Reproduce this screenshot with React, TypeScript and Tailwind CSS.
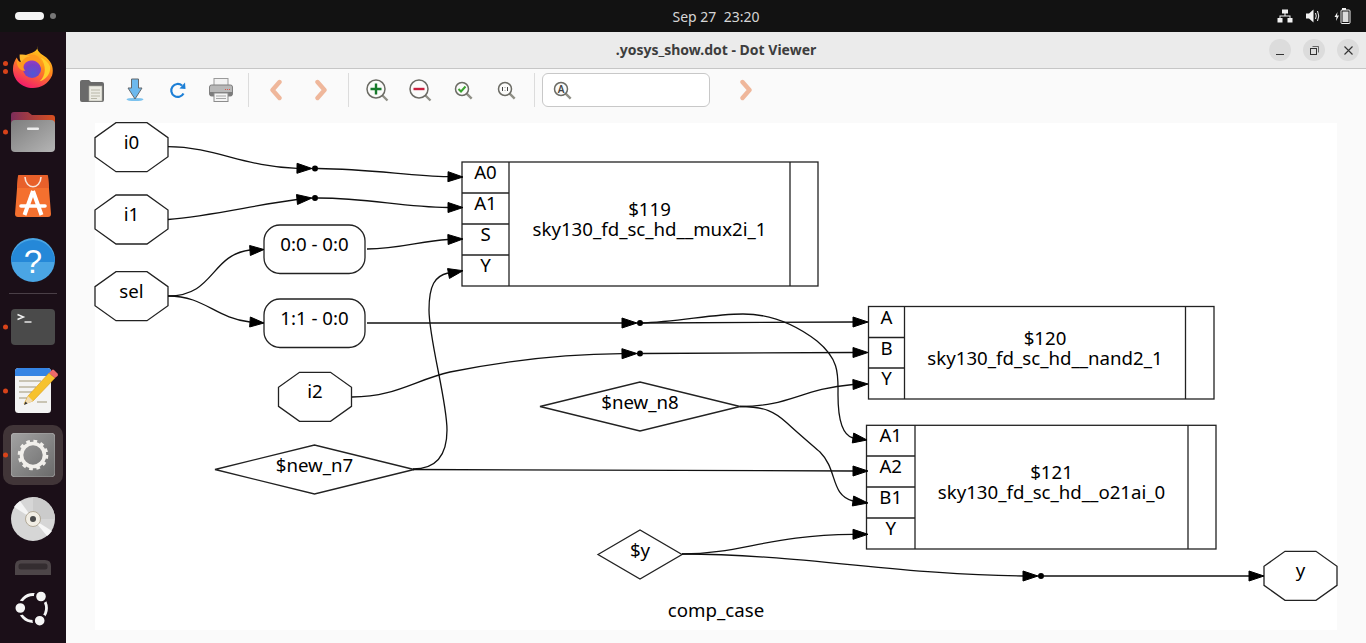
const uiFont = "font-['Noto_Sans',sans-serif]";

function Arrow({ tip, base }: { tip: [number, number]; base: [number, number] }) {
  const dx = tip[0] - base[0];
  const dy = tip[1] - base[1];
  const len = Math.hypot(dx, dy);
  const nx = (-dy / len) * 5;
  const ny = (dx / len) * 5;
  return (
    <polygon
      points={`${tip[0]},${tip[1]} ${base[0] + nx},${base[1] + ny} ${base[0] - nx},${base[1] - ny}`}
      fill="#000"
      stroke="#000"
    />
  );
}

function Octagon({ x, y, label }: { x: number; y: number; label: string }) {
  return (
    <g>
      <polygon
        points={`${x + 21},${y} ${x + 52},${y} ${x + 73},${y + 15} ${x + 73},${y + 34} ${x + 52},${y + 49} ${x + 21},${y + 49} ${x},${y + 34} ${x},${y + 15}`}
        fill="none"
        stroke="#222"
        strokeWidth="1.3"
      />
      <text x={x + 36.5} y={y + 26} textAnchor="middle" fontSize="18.67">{label}</text>
    </g>
  );
}

function Diamond({ left, right, cy, label }: { left: number; right: number; cy: number; label: string }) {
  const cx = (left + right) / 2;
  return (
    <g>
      <polygon
        points={`${left},${cy} ${cx},${cy - 24.5} ${right},${cy} ${cx},${cy + 24.5}`}
        fill="none"
        stroke="#222"
        strokeWidth="1.3"
      />
      <text x={cx} y={cy + 2} textAnchor="middle" fontSize="18.67">{label}</text>
    </g>
  );
}

function Pill({ y, label }: { y: number; label: string }) {
  return (
    <g>
      <rect x="264" y={y} width="101" height="48.5" rx="16" fill="none" stroke="#222" strokeWidth="1.3" />
      <text x="314.5" y={y + 26} textAnchor="middle" fontSize="18.67">{label}</text>
    </g>
  );
}

type CellProps = {
  x: number;
  right: number;
  col: number;
  end: number;
  rows: number[];
  ports: string[];
  title: string;
  cell: string;
};

function Cell({ x, right, col, end, rows, ports, title, cell }: CellProps) {
  const top = rows[0];
  const bottom = rows[rows.length - 1];
  const mid = (col + end) / 2;
  const midY = (top + bottom) / 2;
  return (
    <g>
      <rect x={x} y={top} width={right - x} height={bottom - top} fill="none" stroke="#222" strokeWidth="1.3" />
      <line x1={col} y1={top} x2={col} y2={bottom} stroke="#222" strokeWidth="1.3" />
      <line x1={end} y1={top} x2={end} y2={bottom} stroke="#222" strokeWidth="1.3" />
      {rows.slice(1, -1).map((r) => (
        <line key={r} x1={x} y1={r} x2={col} y2={r} stroke="#222" strokeWidth="1.3" />
      ))}
      {ports.map((p, i) => (
        <text key={p} x={(x + col) / 2} y={rows[i] + 17} textAnchor="middle" fontSize="18.67">{p}</text>
      ))}
      <text x={mid} y={midY - 8} textAnchor="middle" fontSize="18.67">{title}</text>
      <text x={mid} y={midY + 12} textAnchor="middle" fontSize="18.67">{cell}</text>
    </g>
  );
}

const edges = [
  "M168,146.7 C215,147 245,167 297,168.3",
  "M168,219.5 C210,216 255,205 297,199.5",
  "M318,168.5 C370,169 410,176 448,176.7",
  "M318,198 C370,198 400,207 448,207.5",
  "M367,249 C400,249 420,241 448,239.5",
  "M168,296 C215,296 210,255 250,250",
  "M168,296 C205,296 215,318 250,322",
  "M367,323 L622,323",
  "M413,469 C440,469 447,450 447,430 C447,400 429,340 429,310 C429,285 435,276 448,273",
  "M352,397 C395,397 415,380 450,372 C510,360 570,354 622,353.7",
  "M643,353.5 L853,352.5",
  "M643,323 L853,322",
  "M640,323 C680,322 710,314 743,314 C775,314 800,328 817,341 C840,360 838,375 838,395 C838,420 842,435 853,438",
  "M740,406.5 C790,406.5 800,389 853,384.5",
  "M740,406.5 C765,406.5 775,412 787,423 C800,435 812,445 820,452 C838,470 830,495 853,501",
  "M413,469.5 L853,471",
  "M682,554 C740,554 770,535 853,534.3",
  "M682,554 C800,554 900,575 1023,576",
  "M1044,576 L1249,576",
];

const arrows: { tip: [number, number]; base: [number, number] }[] = [
  { tip: [312, 168.5], base: [297, 168.3] },
  { tip: [312, 198], base: [297, 199.5] },
  { tip: [463, 177], base: [448, 176.7] },
  { tip: [463, 207.5], base: [448, 207.5] },
  { tip: [463, 239], base: [448, 239.5] },
  { tip: [264, 249.5], base: [250, 250.5] },
  { tip: [264, 323], base: [250, 322] },
  { tip: [637, 323], base: [622, 323] },
  { tip: [463, 270.7], base: [448.5, 273.5] },
  { tip: [637, 353.5], base: [622, 353.7] },
  { tip: [868, 352.5], base: [853, 352.5] },
  { tip: [868, 322], base: [853, 322] },
  { tip: [867, 440], base: [853, 438] },
  { tip: [868, 384], base: [853, 384.5] },
  { tip: [868, 503], base: [853, 501] },
  { tip: [868, 471], base: [853, 471] },
  { tip: [868, 534.3], base: [853, 534.3] },
  { tip: [1038, 576], base: [1023, 576] },
  { tip: [1264, 576], base: [1249, 576] },
];

function Graph() {
  return (
    <svg viewBox="95 123 1242 507" className="block h-[507px] w-[1242px] overflow-visible" fill="#000" fontFamily="'Noto Sans', sans-serif">
      <Octagon x={95} y={122.7} label="i0" />
      <Octagon x={95} y={195} label="i1" />
      <Octagon x={95} y={271.7} label="sel" />
      <Octagon x={278.5} y={372.3} label="i2" />
      <Octagon x={1264} y={551.3} label="y" />
      <Pill y={225} label="0:0 - 0:0" />
      <Pill y={299} label="1:1 - 0:0" />
      <Diamond left={215} right={414} cy={469.5} label="$new_n7" />
      <Diamond left={540} right={740} cy={406.5} label="$new_n8" />
      <Diamond left={598} right={682} cy={554.5} label="$y" />
      <Cell x={462} right={818} col={509} end={790} rows={[162, 193, 224, 255, 286]} ports={["A0", "A1", "S", "Y"]} title="$119" cell="sky130_fd_sc_hd__mux2i_1" />
      <Cell x={868.5} right={1214} col={904.5} end={1185.5} rows={[306.5, 337.5, 368, 399]} ports={["A", "B", "Y"]} title="$120" cell="sky130_fd_sc_hd__nand2_1" />
      <Cell x={866.5} right={1216} col={915} end={1188} rows={[425.3, 456, 487, 518, 549]} ports={["A1", "A2", "B1", "Y"]} title="$121" cell="sky130_fd_sc_hd__o21ai_0" />
      {edges.map((d) => (
        <path key={d} d={d} fill="none" stroke="#111" strokeWidth="1.3" />
      ))}
      {arrows.map((a, i) => (
        <Arrow key={i} tip={a.tip} base={a.base} />
      ))}
      {[[315, 168.5], [315, 198], [640, 323], [640, 353.5], [1041, 576]].map(([cx, cy]) => (
        <circle key={cx + "-" + cy} cx={cx} cy={cy} r="3" fill="#000" />
      ))}
      <text x="716" y="617" textAnchor="middle" fontSize="18.67">comp_case</text>
    </svg>
  );
}

function Firefox() {
  return (
    <svg viewBox="0 0 44 44" className="h-[44px] w-[42px]">
      <defs>
        <linearGradient id="ffBody" x1="0.75" y1="0" x2="0.3" y2="1">
          <stop offset="0" stopColor="#ffd91f" />
          <stop offset="0.45" stopColor="#ff8a1c" />
          <stop offset="1" stopColor="#f3166e" />
        </linearGradient>
        <radialGradient id="ffGlobe" cx="0.55" cy="0.75" r="0.8">
          <stop offset="0" stopColor="#4f58d6" />
          <stop offset="0.6" stopColor="#7a3fc4" />
          <stop offset="1" stopColor="#a33cc0" />
        </radialGradient>
      </defs>
      <path d="M27 0 C25 5 30 8 36 12 C42 17 44 24 42 31 C38 40 30 44 22 44 C10 44 1 35 1 24 C1 19 3 15 5 12 C6 15 7 16 9 17 C10 12 14 9 18 8 C22 7 27 5 27 0Z" fill="url(#ffBody)" />
      <circle cx="21" cy="24" r="9.5" fill="url(#ffGlobe)" />
      <path d="M5 13 C4 22 9 26 14 26 C10 22 12 17 18 15.5 C22 14.5 28 16 30 22 C32 17 29 11 24 9.5 C17 8 11 11 9 17 C7 17 6 15 5 13Z" fill="#ff9a1e" />
      <path d="M8 9 C8 13 8 15 10 17 C12 13 15 11 19 11 C15 9 12 9 8 9Z" fill="#ffb92b" />
      <path d="M30 12 C36 20 36 31 29 37 C36 35 40 29 40 23 C40 19 36 15 30 12Z" fill="#ffcf2b" />
    </svg>
  );
}

function Files() {
  return (
    <svg viewBox="0 0 44 40" className="h-[40px] w-[44px]">
      <defs>
        <linearGradient id="fTab" x1="0" y1="0" x2="1" y2="0">
          <stop offset="0" stopColor="#7c2d5a" />
          <stop offset="1" stopColor="#d8501f" />
        </linearGradient>
        <linearGradient id="fFront" x1="0" y1="0" x2="1" y2="1">
          <stop offset="0" stopColor="#7d7d7d" />
          <stop offset="1" stopColor="#b5b5b5" />
        </linearGradient>
      </defs>
      <path d="M0 3 Q0 0 3 0 H17 L21 3 H41 Q44 3 44 6 V20 H0Z" fill="url(#fTab)" />
      <rect x="0" y="8" width="44" height="32" rx="4" fill="url(#fFront)" />
      <rect x="16" y="15.5" width="12" height="2.5" rx="1" fill="#ececec" />
    </svg>
  );
}

function Store() {
  return (
    <svg viewBox="0 0 36 42" className="h-[42px] w-[36px]">
      <path d="M3 1 Q3 0 5 0 H31 Q33 0 33 1 L36 39 Q36 42 33 42 H3 Q0 42 0 39Z" fill="#f4702f" />
      <path d="M3 1 Q3 0 5 0 H31 Q33 0 33 1 L34 13 H2Z" fill="#e8602a" />
      <path d="M10 2 C10.5 15 25.5 15 26 2" fill="none" stroke="#f7e4da" strokeWidth="1.6" />
      <path d="M18 16 L9.5 40 M18 16 L26.5 40" stroke="#fff" strokeWidth="4" fill="none" />
      <path d="M6 31 H30" stroke="#fff" strokeWidth="3.6" strokeLinecap="round" />
    </svg>
  );
}

function Help() {
  return (
    <svg viewBox="0 0 44 44" className="h-[44px] w-[44px]">
      <circle cx="22" cy="22" r="22" fill="#4aa5e4" />
      <path d="M0 24 A22 22 0 0 1 44 24Z" fill="#2588d8" />
      <text x="22" y="35" textAnchor="middle" fontSize="33" fill="#fff" fontFamily="'Liberation Sans', sans-serif">?</text>
    </svg>
  );
}

function Terminal() {
  return (
    <svg viewBox="0 0 44 36" className="h-[36px] w-[44px]">
      <rect width="44" height="36" rx="4" fill="#4a4a4a" />
      <path d="M6.5 5.5 L12.5 8 L6.5 10.5" fill="none" stroke="#f2f2f2" strokeWidth="1.4" />
      <path d="M13.5 13 H20.5" stroke="#f2f2f2" strokeWidth="1.4" />
    </svg>
  );
}

function Editor() {
  return (
    <svg viewBox="0 0 44 45" className="h-[45px] w-[44px]">
      <rect x="0" y="0" width="36" height="45" rx="3.5" fill="#f3f3f3" />
      <path d="M0 8 V3.5 Q0 0 3.5 0 H32.5 Q36 0 36 3.5 V8Z" fill="#3584e4" />
      <g fill="#c9c4b4">
        <rect x="4" y="12" width="22" height="2" />
        <rect x="4" y="18" width="17" height="2" />
        <rect x="4" y="23" width="13" height="2" />
        <rect x="4" y="29" width="10" height="2" />
        <rect x="22" y="33" width="10" height="2" />
      </g>
      <path d="M9 36 L13 28 L34 5 L40 10 L18 33Z" fill="#f6c22e" stroke="#d99a1a" strokeWidth="0.6" />
      <path d="M34 5 L37 2 Q38 1 39 2 L42.5 5.5 Q43.5 7 42.5 8 L40 10Z" fill="#ec6a6a" />
      <path d="M13 28 L9 37 L18 33Z" fill="#f1dcb4" />
      <path d="M10.5 33.5 L9 37 L12.5 35.5Z" fill="#333" />
    </svg>
  );
}

function Gear() {
  return (
    <svg viewBox="0 0 44 44" className="h-[44px] w-[44px]">
      <defs>
        <linearGradient id="gBg" x1="0" y1="0" x2="1" y2="1">
          <stop offset="0" stopColor="#a3a3a3" />
          <stop offset="1" stopColor="#6a6a6a" />
        </linearGradient>
      </defs>
      <rect width="44" height="44" rx="4" fill="url(#gBg)" stroke="#c8c8c8" strokeWidth="0.5" />
      <circle cx="22" cy="22" r="11.5" fill="none" stroke="#f1efeb" strokeWidth="3.6" />
      <circle cx="22" cy="22" r="13.5" fill="none" stroke="#f1efeb" strokeWidth="3.6" strokeDasharray="3.6 3.47" />
    </svg>
  );
}

function Disc() {
  return (
    <svg viewBox="0 0 44 44" className="h-[44px] w-[44px]">
      <circle cx="22" cy="22" r="22" fill="#d6d6d6" />
      <path d="M22 22 L3 10 A22 22 0 0 1 9 4Z" fill="#f4f4f4" />
      <path d="M22 22 L41 34 A22 22 0 0 1 36 39Z" fill="#f6f6f6" />
      <path d="M22 22 L22 0 A22 22 0 0 1 44 22Z" fill="#cbcbcb" />
      <circle cx="22" cy="22" r="7.5" fill="#f1ede4" stroke="#a49a86" strokeWidth="0.8" />
      <circle cx="22" cy="22" r="3" fill="#4a4a4a" />
    </svg>
  );
}

function Drive() {
  return (
    <svg viewBox="0 0 36 15" className="h-[15px] w-[36px]">
      <path d="M0 15 V6 Q0 0 6 0 H30 Q36 0 36 6 V15Z" fill="#4d4548" />
      <rect x="3.5" y="3.5" width="29" height="6" rx="2.5" fill="#342d30" />
    </svg>
  );
}

function UbuntuLogo() {
  return (
    <svg viewBox="0 0 36 36" className="h-[36px] w-[36px]">
      <circle cx="18" cy="18" r="13.5" fill="none" stroke="#f5f5f5" strokeWidth="2.8" />
      <g fill="#f5f5f5" stroke="#1b0f18" strokeWidth="2.4">
        <circle cx="26" cy="6.5" r="6" />
        <circle cx="5.3" cy="18" r="6" />
        <circle cx="24.7" cy="30.7" r="6" />
      </g>
    </svg>
  );
}

function RunDot() {
  return <span className="absolute left-[3px] top-1/2 h-[5px] w-[5px] -translate-y-1/2 rounded-full bg-[#d8431a]" />;
}

function Dock() {
  return (
    <aside className="relative flex w-[66px] shrink-0 flex-col items-center bg-[#1b0f18]">
      <div className="relative mt-[13px] flex w-full justify-center">
        <span className="absolute left-[3px] top-[16px] h-[5px] w-[5px] rounded-full bg-[#d8431a]" />
        <span className="absolute left-[3px] top-[24px] h-[5px] w-[5px] rounded-full bg-[#d8431a]" />
        <Firefox />
      </div>
      <div className="relative mt-[23px] flex w-full justify-center">
        <RunDot />
        <Files />
      </div>
      <div className="mt-[23px] flex w-full justify-center"><Store /></div>
      <div className="mt-[21px] flex w-full justify-center"><Help /></div>
      <div className="mt-[11px] h-px w-[48px] bg-[#4a3f47]" />
      <div className="relative mt-[15px] flex w-full justify-center">
        <RunDot />
        <Terminal />
      </div>
      <div className="relative mt-[23px] flex w-full justify-center pl-[8px]">
        <RunDot />
        <Editor />
      </div>
      <div className="relative mt-[12px] flex h-[60px] w-[60px] items-center justify-center rounded-[10px] bg-[#413538]">
        <span className="absolute left-0 top-1/2 h-[5px] w-[5px] -translate-y-1/2 rounded-full bg-[#d8431a]" />
        <Gear />
      </div>
      <div className="mt-[12px] flex w-full justify-center"><Disc /></div>
      <div className="mt-[19px] flex w-full justify-center"><Drive /></div>
      <div className="mt-[15px] flex w-full justify-center"><UbuntuLogo /></div>
    </aside>
  );
}

function TopBar() {
  return (
    <header className={"relative flex h-[32px] shrink-0 items-center justify-center bg-[#121212] text-[14px] text-[#d6d6d6] " + uiFont}>
      <div className="absolute left-[15px] top-[12px] flex items-center gap-[6px]">
        <span className="h-[8px] w-[29px] rounded-full bg-[#f4f4f4]" />
        <span className="h-[6px] w-[6px] rounded-full bg-[#777]" />
      </div>
      <span className="ml-[66px] whitespace-pre">Sep 27  23:20</span>
      <div className="absolute right-[15px] top-[8px] flex items-center gap-[13px]">
        <svg viewBox="0 0 16 14" className="h-[14px] w-[16px]" fill="#f2f2f2">
          <rect x="5" y="0.5" width="6" height="4" />
          <rect x="0.5" y="9" width="5" height="4.5" />
          <rect x="10.5" y="9" width="5" height="4.5" />
          <path d="M7.5 4 H8.5 V6.5 H13.5 V9 H12.5 V7.5 H3.5 V9 H2.5 V6.5 H7.5Z" />
        </svg>
        <svg viewBox="0 0 15 14" className="h-[14px] w-[15px]" fill="#f2f2f2">
          <path d="M0 4.5 H3 L7.5 0.5 V13.5 L3 9.5 H0Z" />
          <path d="M9.5 4 Q11 7 9.5 10" fill="none" stroke="#f2f2f2" strokeWidth="1" />
          <path d="M11.5 2 Q14 7 11.5 12" fill="none" stroke="#f2f2f2" strokeWidth="1" />
        </svg>
        <svg viewBox="0 0 17 16" className="h-[16px] w-[17px]" fill="#f2f2f2">
          <path d="M3.5 4 L0.5 9 H2.5 L2 13 L5 7.5 H3Z" />
          <rect x="8" y="0" width="4" height="2" />
          <rect x="7" y="2" width="9" height="13.5" rx="1" fill="none" stroke="#f2f2f2" strokeWidth="1" />
          <rect x="8.5" y="3.5" width="6" height="10.5" fill="#dcdcdc" />
        </svg>
      </div>
    </header>
  );
}

function TitleBar() {
  return (
    <div className={"relative flex h-[37px] shrink-0 items-center justify-center border-b border-[#c6c6c6] bg-[#ebebeb] pb-[2px] text-[14px] font-bold text-[#3d3d3d] " + uiFont}>
      <span>.yosys_show.dot - Dot Viewer</span>
      <div className="absolute right-[7px] top-[7px] flex gap-[12px]">
        <button className="flex h-[22px] w-[22px] items-center justify-center rounded-full bg-[#dcdcdc]">
          <span className="mt-[9px] h-px w-[8px] bg-[#333]" />
        </button>
        <button className="flex h-[22px] w-[22px] items-center justify-center rounded-full bg-[#dcdcdc]">
          <svg viewBox="0 0 9 9" className="h-[9px] w-[9px]" fill="none" stroke="#333" strokeWidth="1">
            <rect x="0.5" y="2.5" width="6" height="6" />
            <path d="M2.5 0.5 H8.5 V6.5" strokeWidth="0.7" />
          </svg>
        </button>
        <button className="flex h-[22px] w-[22px] items-center justify-center rounded-full bg-[#dcdcdc]">
          <svg viewBox="0 0 9 9" className="h-[9px] w-[9px]" stroke="#333" strokeWidth="1.1">
            <path d="M0.5 0.5 L8.5 8.5 M8.5 0.5 L0.5 8.5" />
          </svg>
        </button>
      </div>
    </div>
  );
}

function Lens({ r = 9, children }: { r?: number; children?: React.ReactNode }) {
  const c = 12;
  const d = r * 0.72;
  return (
    <svg viewBox="0 0 26 26" className="h-[26px] w-[26px]">
      <line x1={c + d} y1={c + d} x2={c + d + 5} y2={c + d + 5} stroke="#8f8f86" strokeWidth="2.4" />
      <circle cx={c} cy={c} r={r} fill="#fbfbfa" stroke="#6b6b64" strokeWidth="1.5" />
      {children}
    </svg>
  );
}

function Chevron({ dir }: { dir: "left" | "right" }) {
  return (
    <svg viewBox="0 0 14 22" className="h-[22px] w-[14px]">
      <path
        d={dir === "left" ? "M10.5 3 L3.5 11 L10.5 19" : "M3.5 3 L10.5 11 L3.5 19"}
        fill="none"
        stroke="#efb79b"
        strokeWidth="4.4"
        strokeLinecap="round"
        strokeLinejoin="round"
      />
    </svg>
  );
}

function ToolButton({ w, children }: { w: string; children: React.ReactNode }) {
  return <button className={"flex h-[34px] items-center justify-center " + w}>{children}</button>;
}

function Toolbar() {
  return (
    <div className="flex h-[42px] shrink-0 items-center pl-[4px]">
      <ToolButton w="w-[43px]">
        <svg viewBox="0 0 24 23" className="h-[23px] w-[24px]">
          <path d="M0 3 Q0 1 2 1 H9 L11 3 H22 Q24 3 24 5 V21 Q24 23 22 23 H2 Q0 23 0 21Z" fill="#6a6a6a" />
          <rect x="9" y="7" width="13" height="15" fill="#ecebe3" stroke="#a9a89f" strokeWidth="0.6" />
          <path d="M11 11 H20 M11 14 H20 M11 17 H20 M11 19.5 H17" stroke="#b9b7a8" strokeWidth="1" />
        </svg>
      </ToolButton>
      <ToolButton w="w-[43px]">
        <svg viewBox="0 0 18 24" className="h-[24px] w-[18px]">
          <ellipse cx="9" cy="21.5" rx="8.5" ry="1.6" fill="#7cc2ee" />
          <path d="M5.5 1 H12.5 V10 H16 L9 21 L2 10 H5.5Z" fill="#6db9ee" stroke="#65696c" strokeWidth="1" />
        </svg>
      </ToolButton>
      <ToolButton w="w-[43px]">
        <svg viewBox="0 0 18 18" className="h-[18px] w-[18px]" fill="none">
          <path d="M14.5 12.5 A6.5 6.5 0 1 1 13 4.5" stroke="#1c7fd6" strokeWidth="2.2" />
          <path d="M10.5 7.5 L16.5 8 L16 1.5Z" fill="#1c7fd6" />
        </svg>
      </ToolButton>
      <ToolButton w="w-[43px]">
        <svg viewBox="0 0 24 24" className="h-[24px] w-[24px]">
          <rect x="5" y="0.5" width="14" height="8" fill="#f2f2f2" stroke="#9a9a9a" />
          <rect x="0.5" y="7" width="23" height="11" rx="2" fill="#b8b8b8" stroke="#808080" />
          <rect x="1" y="14" width="22" height="4" fill="#7c7c7c" />
          <rect x="16" y="11" width="1" height="1" fill="#d8574a" />
          <rect x="18" y="11" width="1" height="1" fill="#d8574a" />
          <rect x="20" y="11" width="1" height="1" fill="#d8574a" />
          <rect x="5" y="15" width="14" height="8.5" fill="#f4f4f4" stroke="#8c8c8c" />
          <path d="M7 18 H17 M7 20.5 H17" stroke="#a5a5a5" />
        </svg>
      </ToolButton>
      <span className="ml-[6px] mr-[5px] h-[34px] w-px bg-[#dcdcdc]" />
      <ToolButton w="w-[44px]"><Chevron dir="left" /></ToolButton>
      <ToolButton w="w-[45px]"><Chevron dir="right" /></ToolButton>
      <span className="ml-[5px] mr-[6px] h-[34px] w-px bg-[#dcdcdc]" />
      <ToolButton w="w-[43px]">
        <Lens>
          <path d="M12 6.5 V17.5 M6.5 12 H17.5" stroke="#177a2b" strokeWidth="2.4" />
        </Lens>
      </ToolButton>
      <ToolButton w="w-[43px]">
        <Lens>
          <path d="M6.5 12 H17.5" stroke="#c81e3c" strokeWidth="2.4" />
        </Lens>
      </ToolButton>
      <ToolButton w="w-[43px]">
        <Lens r={6.5}>
          <path d="M8.5 12 L11 14.5 L15.5 9.5" fill="none" stroke="#3aa32f" strokeWidth="2" />
        </Lens>
      </ToolButton>
      <ToolButton w="w-[43px]">
        <Lens r={6.5}>
          <path d="M9.5 10 V14 M14.5 10 V14 M12 10.5 V11 M12 13 V13.5" stroke="#444" strokeWidth="1" />
        </Lens>
      </ToolButton>
      <span className="ml-[7px] mr-[7px] h-[34px] w-px bg-[#dcdcdc]" />
      <div className="flex h-[34px] w-[168px] items-center rounded-[6px] border border-[#c8c8c8] bg-white pl-[6px]">
        <Lens r={6.5}>
          <text x="12" y="15.5" textAnchor="middle" fontSize="10" fontWeight="600" fill="#444" fontFamily="'Noto Sans', sans-serif">A</text>
        </Lens>
      </div>
      <div className="ml-[29px]"><Chevron dir="right" /></div>
    </div>
  );
}

export default function App() {
  return (
    <div className="flex h-[643px] w-[1366px] flex-col overflow-hidden bg-[#121212]">
      <TopBar />
      <div className="flex min-h-0 flex-1">
        <Dock />
        <main className="flex min-w-0 flex-1 flex-col bg-[#fafafa]">
          <TitleBar />
          <Toolbar />
          <div className="flex-1 pl-[29px] pt-[12px]">
            <div className="h-[507px] w-[1242px] bg-white">
              <Graph />
            </div>
          </div>
        </main>
      </div>
    </div>
  );
}
